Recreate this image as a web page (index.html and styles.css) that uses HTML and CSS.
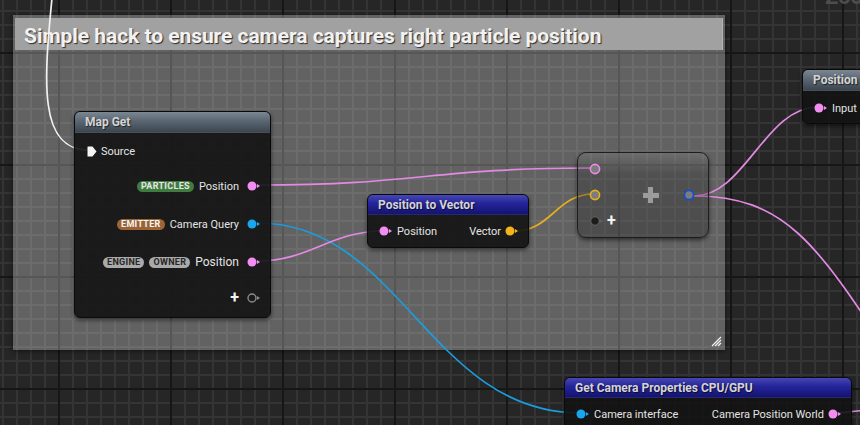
FILE: index.html
```html
<!DOCTYPE html>
<html>
<head>
<meta charset="utf-8">
<link rel="stylesheet" href="styles.css">
</head>
<body>
<div class="graph">
  <div class="zoom-label">Zoom 1:1</div>

  <div class="comment">
    <div class="comment-title">Simple hack to ensure camera captures right particle position</div>
    <svg class="grip" width="11" height="11" viewBox="0 0 11 11">
      <path d="M10 1 L1 10 M10 4 L4 10 M10 7 L7 10" stroke="#f4f4f4" stroke-width="1.2" fill="none"/>
    </svg>
  </div>

  <svg class="wires" width="860" height="425" viewBox="0 0 860 425">
    <path d="M52 -2 C44 80, 38 150, 88 150" stroke="#f2f2f2"/>
    <path d="M258 185 C420 185, 430 168, 592 168" stroke="#e48ae4"/>
    <path d="M258 223 C400 223, 430 413, 580 413" stroke="#1b9ddd"/>
    <path d="M258 261 C310 261, 330 231, 384 231" stroke="#e48ae4"/>
    <path d="M514 231 C552 231, 556 194, 594 194" stroke="#e3ad1f"/>
    <path d="M694 196 C745 196, 765 107, 818 107" stroke="#e48ae4"/>
    <path d="M694 196 C790 196, 820 250, 900 370" stroke="#e48ae4"/>
    <path d="M836 413 C845 413, 852 411, 870 410" stroke="#e48ae4"/>
  </svg>

  <!-- Map Get -->
  <div class="node map-get">
    <div class="node-head head-grey">Map Get</div>
    <div class="node-body">
      <div class="row row-in r-source">
        <svg class="exec" width="10" height="11" viewBox="0 0 10 11"><path d="M1 0.5 H5.5 L9.5 5.5 L5.5 10.5 H1 Q0.5 10.5 0.5 10 V1 Q0.5 0.5 1 0.5 Z" fill="#f4f4f4"/></svg>
        <span class="label">Source</span>
      </div>
      <div class="row row-out r-particles">
        <span class="tag tag-green">PARTICLES</span>
        <span class="label">Position</span>
        <svg class="pin" width="14" height="10" viewBox="0 0 14 10"><circle cx="5" cy="5" r="4.5" fill="#f28ef2"/><path d="M10 3 L13 5 L10 7 Z" fill="#f28ef2"/></svg>
      </div>
      <div class="row row-out r-emitter">
        <span class="tag tag-brown">EMITTER</span>
        <span class="label">Camera Query</span>
        <svg class="pin" width="14" height="10" viewBox="0 0 14 10"><circle cx="5" cy="5" r="4.5" fill="#19a6ef"/><path d="M10 3 L13 5 L10 7 Z" fill="#19a6ef"/></svg>
      </div>
      <div class="row row-out r-engine">
        <span class="tag tag-grey">ENGINE</span>
        <span class="tag tag-grey">OWNER</span>
        <span class="label label-big">Position</span>
        <svg class="pin" width="14" height="10" viewBox="0 0 14 10"><circle cx="5" cy="5" r="4.5" fill="#f28ef2"/><path d="M10 3 L13 5 L10 7 Z" fill="#f28ef2"/></svg>
      </div>
      <div class="row row-out r-add">
        <span class="plus-small">+</span>
        <svg class="pin" width="14" height="10" viewBox="0 0 14 10"><circle cx="5" cy="5" r="4" fill="none" stroke="#8a8a8a" stroke-width="1.4"/><path d="M10 3 L13 5 L10 7 Z" fill="#8a8a8a"/></svg>
      </div>
    </div>
  </div>

  <!-- Position to Vector -->
  <div class="node pos-vec">
    <div class="node-head head-blue">Position to Vector</div>
    <div class="node-body body-pv">
      <div class="row split">
        <div class="side">
          <svg class="pin" width="14" height="10" viewBox="0 0 14 10"><circle cx="5" cy="5" r="4.5" fill="#f28ef2"/><path d="M10 3 L13 5 L10 7 Z" fill="#f28ef2"/></svg>
          <span class="label">Position</span>
        </div>
        <div class="side">
          <span class="label">Vector</span>
          <svg class="pin" width="14" height="10" viewBox="0 0 14 10"><circle cx="5" cy="5" r="4.5" fill="#f4b51c"/><path d="M10 3 L13 5 L10 7 Z" fill="#f4b51c"/></svg>
        </div>
      </div>
    </div>
  </div>

  <!-- Add node -->
  <div class="node add-node">
    <div class="add-inputs">
      <div class="add-pin"><svg width="14" height="12" viewBox="0 0 14 12"><circle cx="6" cy="6" r="4.6" fill="#7c7c7c" stroke="#ec8aec" stroke-width="1.6"/></svg></div>
      <div class="add-pin"><svg width="14" height="12" viewBox="0 0 14 12"><circle cx="6" cy="6" r="4.6" fill="#7c7c7c" stroke="#e8b020" stroke-width="1.6"/></svg></div>
      <div class="add-pin"><svg width="14" height="12" viewBox="0 0 14 12"><circle cx="6" cy="6" r="4.2" fill="#1c1c1c" stroke="#666666" stroke-width="1"/><path d="M10.5 4 L13 6 L10.5 8 Z" fill="#666666"/></svg><span class="plus-small">+</span></div>
    </div>
    <div class="add-op"><span class="big-plus"></span></div>
    <div class="add-output"><svg width="14" height="12" viewBox="0 0 14 12"><circle cx="6" cy="6" r="4.6" fill="#7c7c7c" stroke="#1250c8" stroke-width="1.8"/></svg></div>
  </div>

  <!-- Position (top right) -->
  <div class="node pos-node">
    <div class="node-head head-grey">Position</div>
    <div class="node-body body-pos">
      <div class="row row-in">
        <svg class="pin" width="14" height="10" viewBox="0 0 14 10"><circle cx="5" cy="5" r="4.5" fill="#f28ef2"/><path d="M10 3 L13 5 L10 7 Z" fill="#f28ef2"/></svg>
        <span class="label">Input</span>
      </div>
    </div>
  </div>

  <!-- Get Camera Properties -->
  <div class="node cam-node">
    <div class="node-head head-blue">Get Camera Properties CPU/GPU</div>
    <div class="node-body body-cam">
      <div class="row split">
        <div class="side">
          <svg class="pin" width="14" height="10" viewBox="0 0 14 10"><circle cx="5" cy="5" r="4.5" fill="#19a6ef"/><path d="M10 3 L13 5 L10 7 Z" fill="#19a6ef"/></svg>
          <span class="label">Camera interface</span>
        </div>
        <div class="side">
          <span class="label">Camera Position World</span>
          <svg class="pin" width="14" height="10" viewBox="0 0 14 10"><circle cx="5" cy="5" r="4.5" fill="#f28ef2"/><path d="M10 3 L13 5 L10 7 Z" fill="#f28ef2"/></svg>
        </div>
      </div>
    </div>
  </div>
</div>
</body>
</html>
```

FILE: styles.css
```css
* { box-sizing: border-box; }
html, body { margin: 0; padding: 0; }
body {
  width: 860px;
  height: 425px;
  overflow: hidden;
  font-family: Roboto, "Liberation Sans", sans-serif;
  background: #262626;
}
.graph {
  position: relative;
  width: 860px;
  height: 425px;
  overflow: hidden;
  background-color: #262626;
  background-image:
    linear-gradient(to right, #161616 2px, transparent 2px),
    linear-gradient(to bottom, #161616 2px, transparent 2px),
    linear-gradient(to right, #343434 2px, transparent 2px),
    linear-gradient(to bottom, #343434 2px, transparent 2px);
  background-size: 112px 112px, 112px 112px, 14px 14px, 14px 14px;
  background-position: 58px 52px, 58px 52px, 2px 10px, 2px 10px;
}
.zoom-label {
  position: absolute;
  left: 825px;
  top: -14px;
  font-size: 22px;
  font-weight: 700;
  color: #4d4d4d;
  white-space: nowrap;
  line-height: 22px;
}

/* comment box */
.comment {
  position: absolute;
  left: 13px;
  top: 15px;
  width: 712px;
  height: 335px;
  background: rgba(255, 255, 255, 0.28);
  box-shadow: 0 1px 5px rgba(0, 0, 0, 0.55);
  padding: 3px 2px 0 2px;
}
.comment-title {
  height: 32px;
  background: #a1a1a1;
  border-right: 1px solid #b4b4b4;
  color: #f2f2f2;
  font-size: 21px;
  font-weight: 700;
  line-height: 32px;
  padding-top: 2px;
  padding-left: 9px;
  letter-spacing: -0.05px;
  text-shadow: 1px 1px 1px #2c2c2c;
  white-space: nowrap;
  overflow: hidden;
}
.grip {
  position: absolute;
  right: 3px;
  bottom: 3px;
}

.wires {
  position: absolute;
  left: 0;
  top: 0;
}
.wires path {
  fill: none;
  stroke-width: 1.7;
}

/* nodes */
.node {
  position: absolute;
  border-radius: 6px;
  background: rgba(18, 19, 18, 0.9);
  border: 1px solid #0a0a0a;
  box-shadow: 0 2px 4px rgba(0, 0, 0, 0.55);
  color: #e2e2e2;
  overflow: hidden;
}
.node-head {
  height: 20px;
  line-height: 20px;
  padding-left: 10px;
  font-size: 12px;
  font-weight: 700;
  color: #d4d4d4;
  text-shadow: 1px 1px 1px rgba(0, 0, 0, 0.6);
  white-space: nowrap;
  border-bottom: 1px solid rgba(0, 0, 0, 0.4);
}
.head-grey {
  background: linear-gradient(to bottom, #7b8791 0%, #5a6672 45%, #3b4650 100%);
}
.head-blue {
  background: linear-gradient(to bottom, #4646b4 0%, #24249a 45%, #141470 100%);
}
.node-body { display: flex; flex-direction: column; }
.row {
  height: 20px;
  display: flex;
  align-items: center;
}
.row-out { justify-content: flex-end; padding-right: 9px; }
.row-in { padding-left: 11px; }
.label {
  font-size: 11px;
  color: #e4e4e4;
  white-space: nowrap;
}
.label-big { font-size: 12px; }
.pin { flex: none; display: block; }
.row-out .pin { margin-left: 8px; }
.row-in .pin { margin-right: 4px; }
.exec { display: block; margin-right: 4px; margin-left: 1px; }

.tag {
  height: 11px;
  line-height: 11px;
  padding: 0 4px;
  border-radius: 6px;
  font-size: 9px;
  font-weight: 700;
  letter-spacing: 0.3px;
  margin-right: 5px;
}
.tag-green { background: #3f7d3f; color: #e6e6e6; }
.tag-brown { background: #9c6436; color: #f4f4f4; }
.tag-grey { background: #aaaaaa; color: #262626; }

.plus-small {
  font-size: 16px;
  font-weight: 700;
  color: #f4f4f4;
  line-height: 10px;
}

/* Map Get */
.map-get { left: 74px; top: 111px; width: 197px; height: 207px; }
.map-get .node-head { height: 21px; line-height: 21px; }
.r-source { margin-top: 8px; }
.r-particles { margin-top: 15px; }
.r-emitter { margin-top: 18px; }
.r-engine { margin-top: 18px; }
.r-add { margin-top: 16px; }
.r-add .pin { margin-left: 8px; }

/* Position to Vector */
.pos-vec { left: 367px; top: 194px; width: 162px; height: 54px; }
.body-pv { padding-top: 6px; }
.split { justify-content: space-between; padding: 0 9px 0 11px; }
.side { display: flex; align-items: center; }
.side .pin:first-child { margin-right: 4px; }
.side .label + .pin { margin-left: 4px; }

/* Add node */
.add-node {
  left: 577px;
  top: 152px;
  width: 132px;
  height: 86px;
  border-radius: 9px;
  background: linear-gradient(to bottom, rgba(130,130,130,0.35) 0%, rgba(40,40,40,0.3) 25%, rgba(30,30,30,0.32) 100%);
  border: 1px solid #1e1e1e;
  display: flex;
  align-items: stretch;
}
.add-inputs {
  padding-top: 3px;
  padding-left: 11px;
  display: flex;
  flex-direction: column;
}
.add-pin {
  height: 26px;
  display: flex;
  align-items: center;
}
.add-pin svg { display: block; }
.add-pin .plus-small { margin-left: 4px; }
.add-op {
  flex: 1;
  display: flex;
  align-items: center;
  justify-content: center;
  padding-left: 17px;
}
.big-plus {
  width: 16px;
  height: 16px;
  background:
    linear-gradient(#9c9c9c, #9c9c9c) center / 16px 5px no-repeat,
    linear-gradient(#9c9c9c, #9c9c9c) center / 5px 16px no-repeat;
}
.add-output {
  display: flex;
  align-items: center;
  padding-right: 11px;
  padding-left: 14px;
}
.add-output svg { display: block; }

/* Position (top right) */
.pos-node { left: 802px; top: 69px; width: 90px; height: 55px; }
.pos-node .node-head { height: 21px; line-height: 21px; }
.body-pos { padding-top: 7px; }

/* Get Camera Properties */
.cam-node { left: 564px; top: 377px; width: 288px; height: 60px; }
.body-cam { padding-top: 6px; }
.cam-node .split { padding-right: 9px; }
```
